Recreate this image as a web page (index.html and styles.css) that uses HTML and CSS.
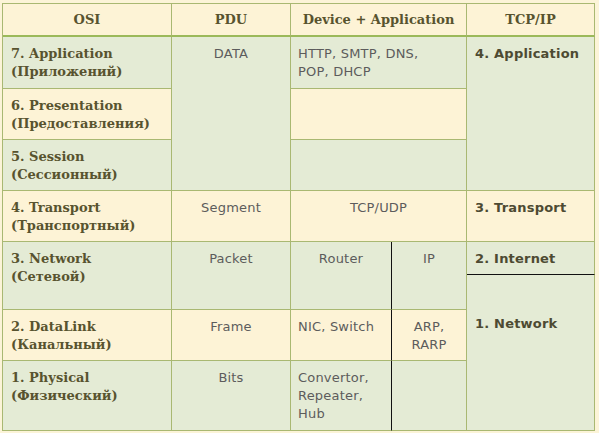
FILE: index.html
```html
<!DOCTYPE html>
<html>
<head>
<meta charset="utf-8">
<link rel="stylesheet" href="styles.css">
</head>
<body>
<div class="table">
  <div class="hd">OSI</div>
  <div class="hd">PDU</div>
  <div class="hd cs2">Device + Application</div>
  <div class="hd">TCP/IP</div>

  <div class="osi g">7. Application<br>(Приложений)</div>
  <div class="txt center g rs3">DATA</div>
  <div class="txt g cs2">HTTP, SMTP, DNS,<br>POP, DHCP</div>
  <div class="tcp g rs3">4. Application</div>

  <div class="osi y">6. Presentation<br>(Предоставления)</div>
  <div class="txt y cs2"></div>

  <div class="osi g">5. Session<br>(Сессионный)</div>
  <div class="txt g cs2"></div>

  <div class="osi y">4. Transport<br>(Транспортный)</div>
  <div class="txt center y">Segment</div>
  <div class="txt center y cs2">TCP/UDP</div>
  <div class="tcp y">3. Transport</div>

  <div class="osi g rs2">3. Network<br>(Сетевой)</div>
  <div class="txt center g rs2">Packet</div>
  <div class="txt center g rs2 black-r">Router</div>
  <div class="txt center g rs2">IP</div>
  <div class="tcp g black-b">2. Internet</div>
  <div class="tcp g rs3 net">1. Network</div>

  <div class="osi y">2. DataLink<br>(Канальный)</div>
  <div class="txt center y">Frame</div>
  <div class="txt y black-r">NIC, Switch</div>
  <div class="txt center y">ARP,<br>RARP</div>

  <div class="osi g">1. Physical<br>(Физический)</div>
  <div class="txt center g">Bits</div>
  <div class="txt g black-r">Convertor,<br>Repeater,<br>Hub</div>
  <div class="txt g"></div>
</div>
</body>
</html>
```

FILE: styles.css
```css
html, body {
  margin: 0;
  padding: 0;
  background: #fcf4d8;
}

.table {
  margin: 3px 0 0 2px;
  width: 593px;
  box-sizing: border-box;
  display: grid;
  grid-template-columns: 169px 119px 101px 75px 128px;
  grid-template-rows: 33px 52px 51px 51px 51px 33px 35px 51px 70px;
  border-top: 1px solid #a9b872;
  border-left: 1px solid #a9b872;
}

.table > div {
  box-sizing: border-box;
  border-right: 1px solid #a9b872;
  border-bottom: 1px solid #a9b872;
}

.cs2 { grid-column: span 2; }
.rs2 { grid-row: span 2; }
.rs3 { grid-row: span 3; }

.g { background: #e4ebd5; }
.y { background: #fdf3d6; }

.hd {
  background: #fdf3d6;
  border-bottom: 2px solid #9bb95a !important;
  display: flex;
  align-items: center;
  justify-content: center;
  font-family: "DejaVu Serif", serif;
  font-weight: bold;
  font-size: 13px;
  color: #58532f;
}

.osi {
  font-family: "DejaVu Serif", serif;
  font-weight: bold;
  font-size: 13px;
  line-height: 18px;
  color: #58532f;
  padding: 8px 8px;
}

.txt {
  font-family: "DejaVu Sans", sans-serif;
  font-size: 13px;
  line-height: 18px;
  color: #5c5c5c;
  padding: 8px 7px;
  letter-spacing: 0.2px;
}

.center { text-align: center; }

.tcp {
  font-family: "DejaVu Sans", sans-serif;
  font-weight: bold;
  font-size: 13px;
  line-height: 18px;
  color: #4d4a32;
  padding: 8px 8px;
  letter-spacing: 0.2px;
}

.net { padding-top: 40px; }

.table > .black-r { border-right-color: #111; }
.table > .black-b { border-bottom-color: #111; }
```
